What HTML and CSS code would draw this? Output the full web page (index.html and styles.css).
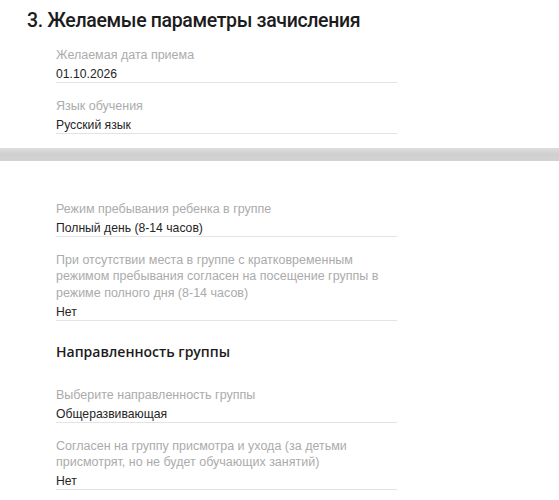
FILE: index.html
```html
<!DOCTYPE html>
<html lang="ru">
<head>
<meta charset="utf-8">
<link rel="stylesheet" href="styles.css">
</head>
<body>
<section class="section top">
  <h2 class="title">3. Желаемые параметры зачисления</h2>
  <div class="fields">
    <div class="field">
      <div class="label">Желаемая дата приема</div>
      <div class="value">01.10.2026</div>
    </div>
    <div class="field">
      <div class="label">Язык обучения</div>
      <div class="value">Русский язык</div>
    </div>
  </div>
</section>
<div class="band"></div>
<section class="section bottom">
  <div class="fields">
    <div class="field">
      <div class="label">Режим пребывания ребенка в группе</div>
      <div class="value">Полный день (8-14 часов)</div>
    </div>
    <div class="field">
      <div class="label">При отсутствии места в группе с кратковременным режимом пребывания согласен на посещение группы в режиме полного дня (8-14 часов)</div>
      <div class="value">Нет</div>
    </div>
  </div>
  <h3 class="subtitle">Направленность группы</h3>
  <div class="fields">
    <div class="field">
      <div class="label">Выберите направленность группы</div>
      <div class="value">Общеразвивающая</div>
    </div>
    <div class="field">
      <div class="label">Согласен на группу присмотра и ухода (за детьми присмотрят, но не будет обучающих занятий)</div>
      <div class="value">Нет</div>
    </div>
  </div>
</section>
</body>
</html>
```
FILE: styles.css
```css
* { box-sizing: border-box; }
html, body { margin: 0; padding: 0; background: #fff; }
body {
  font-family: "Liberation Sans", Arial, sans-serif;
  color: #222;
  width: 559px;
  overflow: hidden;
}
.section { padding: 0 0 0 56px; }
.section.top { padding-top: 9px; padding-bottom: 14px; }
.section.bottom { padding-top: 40.75px; }
.title {
  margin: 0 0 0 -29px;
  font-family: Roboto, "Liberation Sans", sans-serif;
  font-weight: 500;
  font-size: 19.5px;
  letter-spacing: -0.35px;
  line-height: 24px;
  color: #1c1c1c;
}
.fields { width: 341px; display: flex; flex-direction: column; gap: 14.5px; }
.top .fields { margin-top: 14px; }
.field { border-bottom: 1px solid #e3e3e3; }
.label {
  font-size: 12.5px;
  line-height: 16.5px;
  color: #ababab;
}
.value {
  font-size: 12.2px;
  line-height: 16px;
  margin-top: 2.5px;
  color: #252525;
}
.band {
  height: 13px;
  background: linear-gradient(#dedede, #cfcfcf 50%, #d3d3d3);
}
.subtitle {
  margin: 22.5px 0 26px;
  font-family: "Open Sans", "Liberation Sans", sans-serif;
  font-weight: 600;
  font-size: 14px;
  line-height: 18px;
  color: #1c1c1c;
}
```
